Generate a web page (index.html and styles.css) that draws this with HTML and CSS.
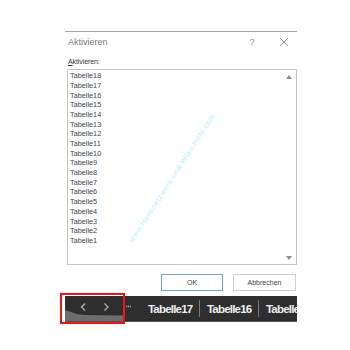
FILE: index.html
```html
<!DOCTYPE html>
<html lang="de">
<head>
<meta charset="utf-8">
<title>Aktivieren</title>
<link rel="stylesheet" href="styles.css">
</head>
<body>
<div class="page">
  <div class="dialog">
    <div class="titlebar">
      <span class="title">Aktivieren</span>
      <span class="help">?</span>
      <span class="close"><svg width="10" height="10" viewBox="0 0 10 10"><path d="M1 1 L9 9 M9 1 L1 9" stroke="#8a8a8a" stroke-width="0.9" fill="none"/></svg></span>
    </div>
    <div class="label"><u>A</u>ktivieren:</div>
    <div class="listbox">
      <ul class="items">
        <li>Tabelle18</li>
        <li>Tabelle17</li>
        <li>Tabelle16</li>
        <li>Tabelle15</li>
        <li>Tabelle14</li>
        <li>Tabelle13</li>
        <li>Tabelle12</li>
        <li>Tabelle11</li>
        <li>Tabelle10</li>
        <li>Tabelle9</li>
        <li>Tabelle8</li>
        <li>Tabelle7</li>
        <li>Tabelle6</li>
        <li>Tabelle5</li>
        <li>Tabelle4</li>
        <li>Tabelle3</li>
        <li>Tabelle2</li>
        <li>Tabelle1</li>
      </ul>
      <div class="scrollcol">
        <svg width="6" height="4" viewBox="0 0 6 4"><path d="M3 0 L6 4 L0 4 Z" fill="#8c8c8c"/></svg>
        <svg width="6" height="4" viewBox="0 0 6 4"><path d="M0 0 L6 0 L3 4 Z" fill="#8c8c8c"/></svg>
      </div>
    </div>
    <div class="buttons">
      <button class="btn btn-primary">OK</button>
      <button class="btn">Abbrechen</button>
    </div>
  </div>

  <div class="tabbar">
    <div class="nav">
      <svg width="58" height="26" viewBox="0 0 58 26">
        <polygon points="0,14 6,16 12,18 20,19 58,19.5 58,25 0,25" fill="#6c6c6c"/>
        <path d="M20 7.5 L16.5 11 L20 14.5" stroke="#b5b5b5" stroke-width="1.2" fill="none"/>
        <path d="M39.5 7.5 L43 11 L39.5 14.5" stroke="#b5b5b5" stroke-width="1.2" fill="none"/>
      </svg>
    </div>
    <div class="more">
      <svg width="17" height="26" viewBox="0 0 17 26"><path d="M3 10.5 H8" stroke="#a8a8a8" stroke-width="1.3" stroke-dasharray="1.2 0.7" fill="none"/></svg>
    </div>
    <div class="tab">Tabelle17</div>
    <div class="tab tab-sep">Tabelle16</div>
    <div class="tab tab-sep">Tabelle15</div>
  </div>

  <div class="highlight"></div>
  <div class="watermark">www.Heimnetzwerk-und-Wlan-Hilfe.com</div>
</div>
</body>
</html>
```

FILE: styles.css
```css
* {
  box-sizing: border-box;
}

html, body {
  margin: 0;
  padding: 0;
  background: #ffffff;
}

body {
  font-family: "Liberation Sans", Arial, sans-serif;
  color: #333333;
}

.page {
  position: relative;
  width: 350px;
  height: 350px;
  padding: 31px 0 0 65px;
  overflow: hidden;
}

.dialog {
  width: 232px;
  border-top: 1px solid #a6a6a6;
  background: #ffffff;
}

.titlebar {
  display: flex;
  align-items: center;
  height: 20px;
  padding-left: 3px;
}

.title {
  flex: 1;
  font-size: 9px;
  color: #7a7a7a;
}

.help {
  width: 10px;
  text-align: center;
  font-size: 8.5px;
  color: #8a8a8a;
}

.close {
  width: 12px;
  margin-left: 21px;
  margin-right: 7px;
  display: flex;
  justify-content: center;
}

.label {
  margin-top: 5px;
  padding-left: 3px;
  font-size: 7px;
  line-height: 10px;
  color: #333333;
  letter-spacing: -0.1px;
}

.label u {
  text-decoration-thickness: 0.7px;
  text-underline-offset: 1px;
}

.listbox {
  display: flex;
  margin-top: 2px;
  margin-left: 2px;
  width: 230px;
  height: 196px;
  border: 1px solid #c6c6c6;
}

.items {
  flex: 1;
  list-style: none;
  margin: 0;
  padding: 1.2px 0 0 2px;
}

.items li {
  font-size: 7.3px;
  line-height: 9.7px;
  height: 9.7px;
  color: #404850;
}

.scrollcol {
  width: 14px;
  display: flex;
  flex-direction: column;
  justify-content: space-between;
  align-items: center;
  padding: 5px 0 4px;
}

.buttons {
  display: flex;
  justify-content: flex-end;
  gap: 10px;
  margin-top: 9px;
  padding-right: 1px;
}

.btn {
  width: 63px;
  height: 17px;
  padding: 0;
  border: 1px solid #d0d0d0;
  background: #ffffff;
  font-family: "Liberation Sans", Arial, sans-serif;
  font-size: 7px;
  color: #444444;
}

.btn-primary {
  width: 62px;
  border-color: #6fa6dc;
}

.tabbar {
  display: flex;
  align-items: stretch;
  margin-top: 5px;
  width: 232px;
  height: 26px;
  background: #2e2e2e;
  overflow: hidden;
  box-shadow: inset 0 -1px 0 #555;
}

.nav {
  width: 58px;
  flex: none;
  display: flex;
}

.more {
  width: 17px;
  flex: none;
  display: flex;
}

.tab {
  flex: none;
  width: 59px;
  padding-left: 8px;
  display: flex;
  align-items: center;
  font-size: 11.5px;
  font-weight: bold;
  letter-spacing: -0.8px;
  color: #efefef;
  white-space: nowrap;
  position: relative;
}

.tab-sep::before {
  content: "";
  position: absolute;
  left: 0;
  top: 4px;
  height: 17px;
  width: 1px;
  background: #7a7a7a;
}

.highlight {
  position: absolute;
  left: 60px;
  top: 293px;
  width: 65px;
  height: 31px;
  border: 2px solid #e3181c;
  box-shadow: 0 0 1px rgba(227, 24, 28, 0.4);
}

.watermark {
  position: absolute;
  left: 172px;
  top: 178px;
  transform: translate(-50%, -50%) rotate(-57deg);
  font-size: 7.5px;
  letter-spacing: 0.5px;
  color: #b2f1f7;
  white-space: nowrap;
}
```
